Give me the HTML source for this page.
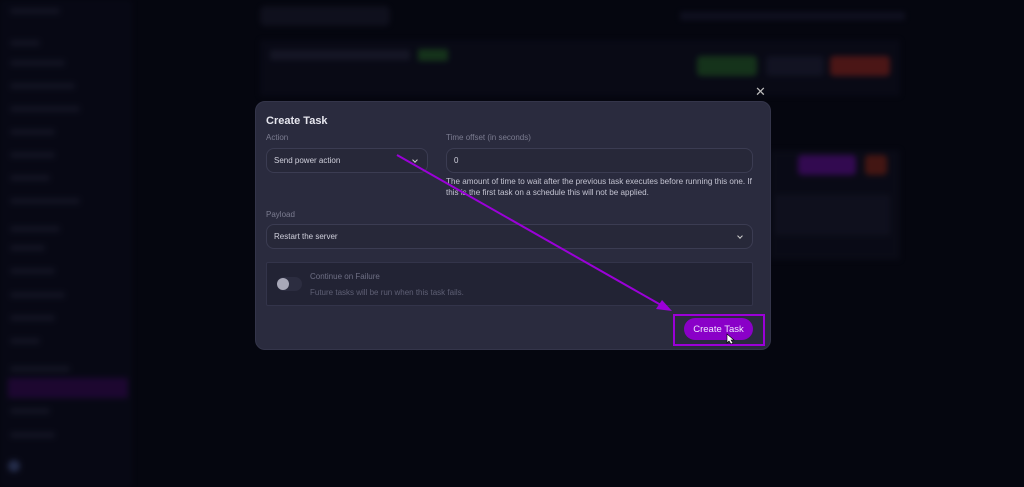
<!DOCTYPE html>
<html><head><meta charset="utf-8"><style>
*{margin:0;padding:0;box-sizing:border-box}
body{width:1024px;height:487px;overflow:hidden;background:#05060f;font-family:"Liberation Sans",sans-serif;position:relative}
.bgw{position:absolute;left:0;top:0;width:1024px;height:487px;opacity:.45;filter:blur(3px)}
.bg{position:absolute}
.sb{left:0;top:0;width:132px;height:487px;background:#0b0c1c}
.it{position:absolute;left:10px;height:6px;background:#24253a;border-radius:3px}
.modal{position:absolute;left:255px;top:101px;width:516px;height:249px;background:#2a2b3e;border-radius:10px;border:1px solid #34354a}
.t{position:absolute;color:#e6e6ee;font-size:11px;font-weight:bold}
.lbl{position:absolute;font-size:8px;color:#7b7c90}
.inp{position:absolute;background:#272839;border:1px solid #3b3c52;border-radius:8px;font-size:8px;color:#d0d0dc;padding-left:7px;display:flex;align-items:center}
.chev{position:absolute;right:10px;top:50%;margin-top:-3px;width:4px;height:4px;border-right:1px solid #ccc;border-bottom:1px solid #ccc;transform:rotate(45deg)}
</style></head><body>
<div class="bgw">
<div class="bg sb"></div>
<div class="it" style="top:8px;width:50px"></div>
<div class="it" style="top:40px;width:30px"></div>
<div class="it" style="top:60px;width:55px"></div>
<div class="it" style="top:83px;width:65px"></div>
<div class="it" style="top:106px;width:70px"></div>
<div class="it" style="top:129px;width:45px"></div>
<div class="it" style="top:152px;width:45px"></div>
<div class="it" style="top:175px;width:40px"></div>
<div class="it" style="top:198px;width:70px"></div>
<div class="it" style="top:226px;width:50px"></div>
<div class="it" style="top:245px;width:35px"></div>
<div class="it" style="top:268px;width:45px"></div>
<div class="it" style="top:292px;width:55px"></div>
<div class="it" style="top:315px;width:45px"></div>
<div class="it" style="top:338px;width:30px"></div>
<div class="it" style="top:366px;width:60px"></div>
<div class="bg" style="left:8px;top:378px;width:120px;height:20px;background:#3a0a5a"></div>
<div class="it" style="top:408px;width:40px"></div>
<div class="it" style="top:432px;width:45px"></div>
<div class="bg" style="left:8px;top:460px;width:12px;height:12px;border-radius:6px;background:#4a5a90"></div>
<div class="bg" style="left:260px;top:6px;width:130px;height:20px;background:#1c1d2e;border-radius:5px"></div>
<div class="bg" style="left:260px;top:40px;width:640px;height:56px;background:#0e0f1e"></div>
<div class="bg" style="left:270px;top:50px;width:140px;height:10px;background:#2a2b40"></div>
<div class="bg" style="left:418px;top:49px;width:30px;height:12px;background:#2a6a2a"></div>
<div class="bg" style="left:697px;top:56px;width:60px;height:20px;background:#2a6a2a;border-radius:4px"></div>
<div class="bg" style="left:766px;top:56px;width:58px;height:20px;background:#22233a;border-radius:4px"></div>
<div class="bg" style="left:830px;top:56px;width:60px;height:20px;background:#a02a20;border-radius:4px"></div>
<div class="bg" style="left:680px;top:12px;width:225px;height:8px;background:#1c1d34"></div>
<div class="bg" style="left:770px;top:150px;width:130px;height:110px;background:#10111f"></div>
<div class="bg" style="left:798px;top:155px;width:58px;height:20px;background:#6a10a0;border-radius:4px"></div>
<div class="bg" style="left:865px;top:155px;width:22px;height:20px;background:#902a18;border-radius:4px"></div>
<div class="bg" style="left:775px;top:195px;width:115px;height:40px;background:#1c1d30"></div>
</div>
<div style="position:absolute;left:755px;top:84px;color:#bbb;font-size:13px">✕</div>
<div class="modal">
<div class="t" style="left:10px;top:13px">Create Task</div>
<div class="lbl" style="left:10px;top:31px">Action</div>
<div class="lbl" style="left:190px;top:31px">Time offset (in seconds)</div>
<div class="inp" style="left:10px;top:46px;width:162px;height:25px">Send power action<span class="chev"></span></div>
<div class="inp" style="left:190px;top:46px;width:307px;height:25px">0</div>
<div style="position:absolute;left:190px;top:74px;width:312px;font-size:8.1px;line-height:11px;color:#c4c4d2">The amount of time to wait after the previous task executes before running this one. If this is the first task on a schedule this will not be applied.</div>
<div class="lbl" style="left:10px;top:108px">Payload</div>
<div class="inp" style="left:10px;top:122px;width:487px;height:25px">Restart the server<span class="chev"></span></div>
<div style="position:absolute;left:10px;top:160px;width:487px;height:44px;background:#222334;border:1px solid #33344a;border-radius:2px">
<div style="position:absolute;left:10px;top:14px;width:25px;height:14px;border-radius:7px;background:#2c2d40"></div>
<div style="position:absolute;left:10px;top:15px;width:12px;height:12px;border-radius:6px;background:#a8a8b8"></div>
<div style="position:absolute;left:43px;top:9px;font-size:8px;color:#6e6f84">Continue on Failure</div>
<div style="position:absolute;left:43px;top:25px;font-size:8px;color:#5e5f74">Future tasks will be run when this task fails.</div>
</div>
</div>
<div style="position:absolute;left:673px;top:314px;width:92px;height:32px;border:2px solid #9b00d8"></div>
<div style="position:absolute;left:684px;top:318px;width:69px;height:22px;background:#8a00c8;border-radius:11px;color:#f0e6ff;font-size:9.5px;display:flex;align-items:center;justify-content:center">Create Task</div>
<svg style="position:absolute;left:0;top:0" width="1024" height="487">
<line x1="397" y1="155" x2="668" y2="309" stroke="#9b00d8" stroke-width="2"/>
<polygon points="672,311 656,309 662,300" fill="#9b00d8"/>
<path d="M727 334 l0 9 l2 -2 l2 3 l2 -1 l-2 -3 l3 0 z" fill="#fff" stroke="#000" stroke-width="0.6"/>
</svg>
</body></html>
